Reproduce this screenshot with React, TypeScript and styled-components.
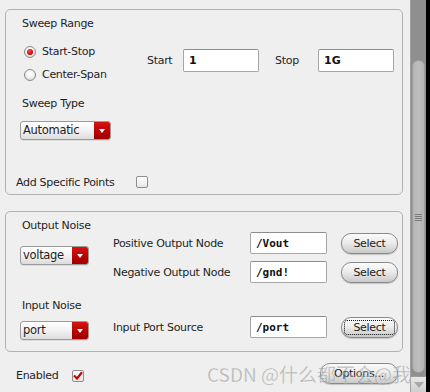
import React from "react";
import styled, { createGlobalStyle } from "styled-components";

const GlobalStyle = createGlobalStyle`
  html, body {
    margin: 0;
    padding: 0;
    background: #efefef;
  }
  body {
    font-family: "DejaVu Sans", Verdana, sans-serif;
    font-size: 11px;
    letter-spacing: -0.3px;
    color: #1e1e1e;
  }
`;

const Window = styled.div`
  width: 430px;
  height: 392px;
  display: flex;
  overflow: hidden;
  position: relative;
`;

const Content = styled.div`
  width: 410px;
  padding-left: 5px;
  box-sizing: border-box;
  display: flex;
  flex-direction: column;
`;

const GroupBox = styled.div<{ $top: number; $height: number }>`
  margin-top: ${(p) => p.$top}px;
  width: 398px;
  height: ${(p) => p.$height}px;
  box-sizing: border-box;
  border: 1px solid #b2b2b2;
  border-radius: 5px;
  display: flex;
  flex-direction: column;
`;

const Label = styled.div<{ $top?: number; $left?: number }>`
  margin-top: ${(p) => p.$top ?? 0}px;
  margin-left: ${(p) => p.$left ?? 0}px;
  line-height: 14px;
  white-space: nowrap;
`;

const RangeRow = styled.div`
  display: flex;
  margin-top: 9px;
  align-items: flex-start;
`;

const RadioColumn = styled.div`
  width: 123px;
  margin-left: 18px;
  display: flex;
  flex-direction: column;
`;

const RadioRow = styled.div`
  height: 23px;
  display: flex;
  align-items: center;
  gap: 6px;
`;

const RadioDot = styled.span<{ $on?: boolean }>`
  width: 12px;
  height: 12px;
  box-sizing: border-box;
  border-radius: 50%;
  border: 1px solid #8c8c8c;
  background: radial-gradient(circle at 50% 35%, #ffffff 0%, #f4f4f4 45%, #c9c9c9 100%);
  display: flex;
  align-items: center;
  justify-content: center;
  &::after {
    content: "";
    display: ${(p) => (p.$on ? "block" : "none")};
    width: 6px;
    height: 6px;
    border-radius: 50%;
    background: radial-gradient(circle at 40% 35%, #ff4a4a, #c40000 70%);
  }
`;

const FieldLabel = styled.div<{ $width: number }>`
  width: ${(p) => p.$width}px;
  height: 23px;
  line-height: 23px;
  margin-top: 9px;
`;

const TextBox = styled.div<{ $mono?: boolean; $width?: number; $height?: number }>`
  width: ${(p) => p.$width ?? 76}px;
  height: ${(p) => p.$height ?? 23}px;
  box-sizing: border-box;
  background: #ffffff;
  border: 1px solid #a6a6a6;
  border-top-color: #8e8e8e;
  border-radius: 2px;
  padding-left: 5px;
  display: flex;
  align-items: center;
  font-weight: bold;
  letter-spacing: 0;
  font-family: ${(p) =>
    p.$mono ? '"DejaVu Sans Mono", "Liberation Mono", monospace' : '"DejaVu Sans", sans-serif'};
  font-size: 11px;
  color: #111;
`;

const StartBox = styled(TextBox)`
  margin-top: 9px;
`;

const Gap = styled.div<{ $w: number }>`
  width: ${(p) => p.$w}px;
  flex: none;
`;

const Combo = styled.div<{ $width: number; $top: number; $left: number }>`
  width: ${(p) => p.$width}px;
  height: 19px;
  margin-top: ${(p) => p.$top}px;
  margin-left: ${(p) => p.$left}px;
  box-sizing: border-box;
  border: 1px solid #9a9a9a;
  border-radius: 3px;
  background: linear-gradient(#ffffff, #f2f2f2 50%, #dcdcdc);
  display: flex;
  overflow: hidden;
  box-shadow: 0 1px 0 rgba(0, 0, 0, 0.08);
`;

const ComboText = styled.div`
  flex: 1;
  padding-left: 2px;
  line-height: 17px;
  font-size: 11.5px;
`;

const ComboArrow = styled.div`
  width: 16px;
  background: linear-gradient(#d41414, #b80000 60%, #9c0000);
  display: flex;
  align-items: center;
  justify-content: center;
  &::after {
    content: "";
    border-left: 3px solid transparent;
    border-right: 3px solid transparent;
    border-top: 4px solid #ffffff;
  }
`;

const CheckRow = styled.div<{ $top: number; $gap: number }>`
  display: flex;
  align-items: center;
  margin-top: ${(p) => p.$top}px;
  margin-left: 10px;
  height: 14px;
  gap: ${(p) => p.$gap}px;
`;

const CheckBox = styled.div`
  width: 12px;
  height: 12px;
  box-sizing: border-box;
  border: 1px solid #8e8e8e;
  border-radius: 2px;
  background: linear-gradient(#ffffff, #e6e6e6);
  display: flex;
  align-items: center;
  justify-content: center;
`;

const NoiseArea = styled.div`
  display: flex;
`;

const NoiseLeft = styled.div`
  width: 107px;
  display: flex;
  flex-direction: column;
`;

const NoiseRight = styled.div`
  display: flex;
  flex-direction: column;
`;

const NodeRow = styled.div<{ $top: number }>`
  display: flex;
  align-items: center;
  margin-top: ${(p) => p.$top}px;
  height: 22px;
`;

const NodeLabel = styled.div`
  width: 137px;
  white-space: nowrap;
`;

const PillButton = styled.div<{ $focus?: boolean; $width?: number }>`
  width: ${(p) => p.$width ?? 57}px;
  height: 21px;
  box-sizing: border-box;
  border: 1px solid #8a8a8a;
  border-radius: 10px;
  background: linear-gradient(#fbfbfb, #ececec 45%, #c9c9c9);
  box-shadow: 0 1px 1px rgba(0, 0, 0, 0.18);
  display: flex;
  align-items: center;
  justify-content: center;
  font-size: 11px;
  color: #222;
  position: relative;
  &::before {
    content: "";
    display: ${(p) => (p.$focus ? "block" : "none")};
    position: absolute;
    inset: 2px;
    border: 1px dotted #111;
    border-radius: 3px;
  }
`;

const BottomRow = styled.div`
  height: 40px;
  display: flex;
  align-items: center;
  padding-top: 7px;
  box-sizing: border-box;
  padding-left: 11px;
  padding-right: 12px;
`;

const EnabledLabel = styled.div`
  margin-right: 14px;
`;

const Spacer = styled.div`
  flex: 1;
`;

const OptionsButton = styled(PillButton)`
  margin-top: -4px;
`;

const ScrollBar = styled.div`
  width: 16px;
  height: 392px;
  background: #8f8f8f;
  display: flex;
  flex-direction: column;
  align-items: center;
  box-sizing: border-box;
  border-left: 1px solid #a0a0a0;
`;

const Thumb = styled.div`
  margin-top: 60px;
  width: 13px;
  height: 313px;
  box-sizing: border-box;
  border: 1px solid #9c9c9c;
  border-radius: 6px;
  background: linear-gradient(90deg, #b4b4b4, #bebebe 50%, #b4b4b4);
  display: flex;
  align-items: center;
  justify-content: center;
`;

const Grip = styled.div`
  width: 7px;
  height: 8px;
  background: repeating-linear-gradient(#7c7c7c 0 1px, transparent 1px 2px);
  margin-top: 2px;
`;

const ArrowButton = styled.div`
  margin-top: auto;
  width: 16px;
  height: 16px;
  background: linear-gradient(#e8e8e8, #cfcfcf);
  border-top: 1px solid #9a9a9a;
  box-sizing: border-box;
  display: flex;
  align-items: center;
  justify-content: center;
  &::after {
    content: "";
    border-left: 5px solid transparent;
    border-right: 5px solid transparent;
    border-top: 6px solid #a8a8a8;
  }
`;

const EdgeStrip = styled.div`
  width: 4px;
  height: 392px;
  background: #000;
`;

const Watermark = styled.div`
  position: absolute;
  left: 207px;
  top: 362px;
  font-family: "Noto Sans CJK SC", "Noto Sans", sans-serif;
  font-size: 19px;
  letter-spacing: 0;
  line-height: 24px;
  color: rgba(130, 130, 130, 0.5);
  -webkit-text-stroke: 0.3px rgba(255, 255, 255, 0.6);
  white-space: nowrap;
  pointer-events: none;
`;

const Check = () => (
  <svg width="10" height="9" viewBox="0 0 10 9">
    <path d="M1 4.5 L4 7.5 L9 1.2" fill="none" stroke="#d60000" strokeWidth="2.2" strokeLinejoin="miter" />
  </svg>
);

type NodeProps = { label: string; value: string; top: number; focus?: boolean };

const NodeField = ({ label, value, top, focus }: NodeProps) => (
  <NodeRow $top={top}>
    <NodeLabel>{label}</NodeLabel>
    <TextBox $mono $width={77} $height={22}>
      {value}
    </TextBox>
    <Gap $w={14} />
    <PillButton $focus={focus}>Select</PillButton>
  </NodeRow>
);

export default function App() {
  return (
    <Window>
      <GlobalStyle />
      <Content>
        <GroupBox $top={9} $height={186}>
          <Label $top={7} $left={16}>Sweep Range</Label>
          <RangeRow>
            <RadioColumn>
              <RadioRow>
                <RadioDot $on />
                Start-Stop
              </RadioRow>
              <RadioRow>
                <RadioDot />
                Center-Span
              </RadioRow>
            </RadioColumn>
            <FieldLabel $width={36}>Start</FieldLabel>
            <StartBox $width={76}>1</StartBox>
            <Gap $w={16} />
            <FieldLabel $width={43}>Stop</FieldLabel>
            <StartBox $width={76}>1G</StartBox>
          </RangeRow>
          <Label $top={11} $left={16}>Sweep Type</Label>
          <Combo $width={91} $top={10} $left={14}>
            <ComboText>Automatic</ComboText>
            <ComboArrow />
          </Combo>
          <CheckRow $top={35} $gap={22}>
            Add Specific Points
            <CheckBox />
          </CheckRow>
        </GroupBox>

        <GroupBox $top={16} $height={141}>
          <NoiseArea>
            <NoiseLeft>
              <Label $top={7} $left={16}>Output Noise</Label>
              <Combo $width={69} $top={13} $left={14}>
                <ComboText>voltage</ComboText>
                <ComboArrow />
              </Combo>
              <Label $top={34} $left={16}>Input Noise</Label>
              <Combo $width={69} $top={8} $left={14}>
                <ComboText>port</ComboText>
                <ComboArrow />
              </Combo>
            </NoiseLeft>
            <NoiseRight>
              <NodeField label="Positive Output Node" value="/Vout" top={20} />
              <NodeField label="Negative Output Node" value="/gnd!" top={7} />
              <NodeField label="Input Port Source" value="/port" top={33} focus />
            </NoiseRight>
          </NoiseArea>
        </GroupBox>

        <BottomRow>
          <EnabledLabel>Enabled</EnabledLabel>
          <CheckBox>
            <Check />
          </CheckBox>
          <Spacer />
          <OptionsButton $width={78}>Options...</OptionsButton>
        </BottomRow>
      </Content>
      <ScrollBar>
        <Thumb>
          <Grip />
        </Thumb>
        <ArrowButton />
      </ScrollBar>
      <EdgeStrip />
      <Watermark>CSDN @什么都不会@我</Watermark>
    </Window>
  );
}
